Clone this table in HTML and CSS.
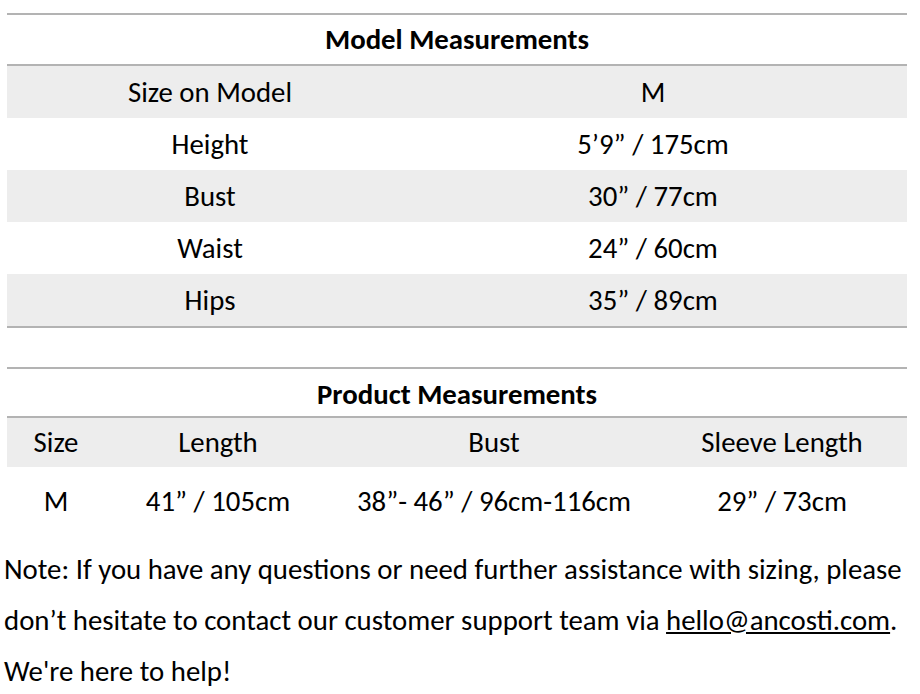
FILE: index.html
```html
<!DOCTYPE html>
<html>
<head>
<meta charset="utf-8">
<link rel="stylesheet" href="styles.css">
</head>
<body>
<div class="page">
  <table class="tbl model">
    <colgroup><col class="m1"><col class="m2"></colgroup>
    <thead>
      <tr class="head"><th colspan="2">Model Measurements</th></tr>
    </thead>
    <tbody>
      <tr class="shade"><td>Size on Model</td><td class="val">M</td></tr>
      <tr><td>Height</td><td class="val">5’9” / 175cm</td></tr>
      <tr class="shade"><td>Bust</td><td class="val">30” / 77cm</td></tr>
      <tr><td>Waist</td><td class="val">24” / 60cm</td></tr>
      <tr class="shade last"><td>Hips</td><td class="val">35” / 89cm</td></tr>
    </tbody>
  </table>

  <table class="tbl product">
    <colgroup><col class="p1"><col class="p2"><col class="p3"><col class="p4"></colgroup>
    <thead>
      <tr class="head"><th colspan="4">Product Measurements</th></tr>
    </thead>
    <tbody>
      <tr class="shade"><td>Size</td><td>Length</td><td>Bust</td><td>Sleeve Length</td></tr>
      <tr class="tall"><td>M</td><td>41” / 105cm</td><td>38”- 46” / 96cm-116cm</td><td>29” / 73cm</td></tr>
    </tbody>
  </table>

  <p class="note">Note: If you have any questions or need further assistance with sizing, please<br>don’t hesitate to contact our customer support team via <a class="mail" href="#">hello@ancosti.com</a>.<br>We're here to help!</p>
</div>
</body>
</html>
```
FILE: styles.css
```css
html, body {
  margin: 0;
  padding: 0;
  background: #ffffff;
}
body {
  font-family: Carlito, Calibri, "Open Sans", sans-serif;
  font-size: 28.8px;
  color: #000000;
}
.page {
  padding: 13px 0 0 0;
}
.tbl {
  margin-left: 7px;
  width: 900px;
  border-collapse: collapse;
  table-layout: fixed;
}
.tbl th, .tbl td {
  padding: 0;
  text-align: center;
  vertical-align: middle;
}
.tbl th {
  font-weight: bold;
  border-top: 2px solid #b3b3b3;
  border-bottom: 2px solid #b3b3b3;
}
.model .head th {
  height: 49px;
}
.model tbody tr td {
  height: 52px;
}
.model tbody tr td.val {
  padding-right: 14px;
}
.model .last td {
  border-bottom: 2px solid #b3b3b3;
}
.shade td {
  background: #ededed;
}
.m1 { width: 406px; }
.m2 { width: 494px; }
.product {
  margin-top: 39px;
}
.product .head th {
  height: 44px;
  padding-top: 3px;
}
.product tbody .shade td {
  height: 49px;
}
.product tbody .tall td {
  height: 68px;
}
.p1 { width: 98px; }
.p2 { width: 226px; }
.p3 { width: 326px; }
.p4 { width: 250px; }
.note {
  margin: 9px 0 0 4px;
  line-height: 51px;
  white-space: nowrap;
}
.mail {
  color: #000000;
  text-decoration: underline;
}
```
